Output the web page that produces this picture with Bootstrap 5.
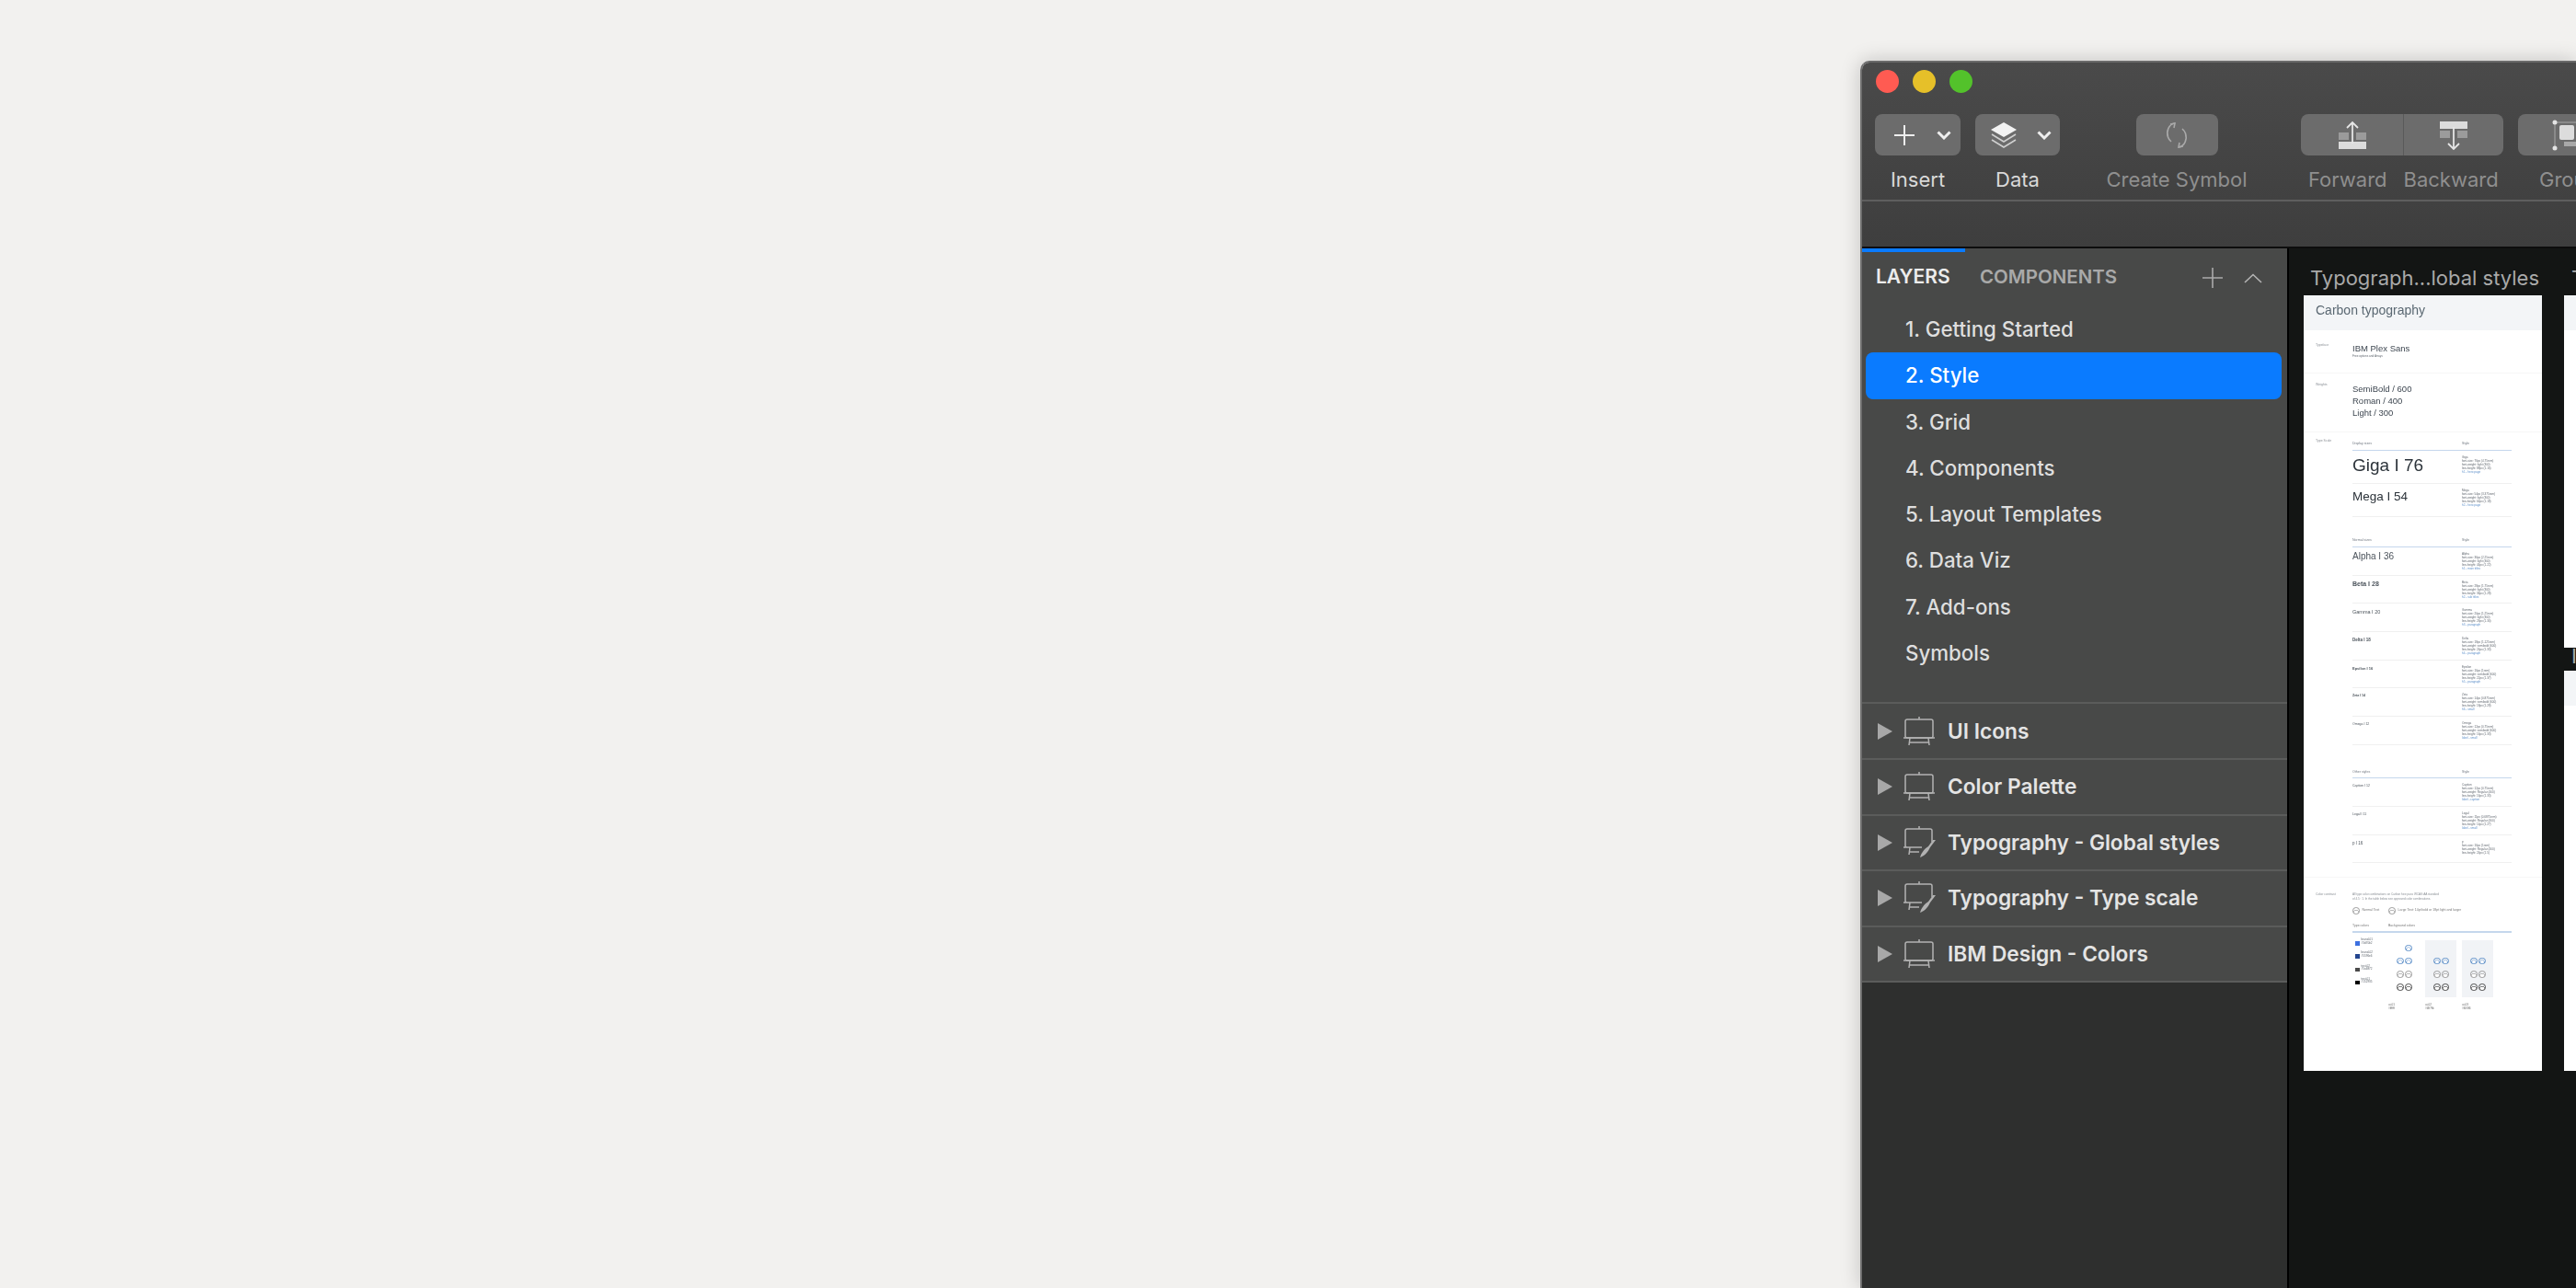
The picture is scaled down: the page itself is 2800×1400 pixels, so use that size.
<!DOCTYPE html>
<html lang="en">

<head>
  <meta charset="UTF-8" />
  <title>Sketch - Carbon Design Kit</title>
  <link href="https://cdn.jsdelivr.net/npm/bootstrap@5.3.0/dist/css/bootstrap.min.css" rel="stylesheet" />
  <style>
    html, body { height: 100%; }
    body {
      background-color: #f2f1ef;
      font-family: Inter, "Liberation Sans", sans-serif;
      overflow: hidden;
      padding: 66px 0 0 2022px;
    }

    /* App window */
    .app-window {
      height: 1334px;
      border-top: 2px solid #6a6a6a;
      border-left: 2px solid #6f6f6f;
      border-top-left-radius: 10px;
      box-shadow: 0 0 22px rgba(0, 0, 0, .2);
      overflow: hidden;
    }
    .top-part { background: linear-gradient(#4a4a4a, #414141); border-bottom: 2px solid #5e5e5e; padding: 8px 0 9px 14px; height: 151px; }
    .light { width: 25px; height: 25px; border-radius: 50%; }
    .light-red { background: #ff5b52; }
    .light-yellow { background: #e6c029; }
    .light-green { background: #53c22b; }
    .lights { gap: 15px; padding-left: 1px; margin-bottom: 23px; }
    .tool-item { flex: none; }
    .item-data { margin-left: 16px; }
    .item-symbol { margin-left: 50px; width: 154px; }
    .item-order { margin-left: 58px; width: 220px; }
    .item-group { margin-left: 16px; }
    .tool-btn {
      --bs-btn-padding-x: 0;
      --bs-btn-padding-y: 0;
      --bs-btn-border-width: 0;
      --bs-btn-border-radius: 8px;
      --bs-btn-bg: #6c6c6c;
      --bs-btn-hover-bg: #6c6c6c;
      height: 45px;
      background-color: #6c6c6c;
    }
    .btn-insert { width: 93px; }
    .btn-data { width: 92px; }
    .btn-symbol { width: 89px; }
    .btn-forward { width: 111px; }
    .btn-backward { width: 109px; border-left: 1px solid #5a5a5a; }
    .btn-group-ico { width: 116px; }
    .ico-plus { margin-left: 20px; }
    .ico-layers { margin-left: 16px; }
    .chev-insert { margin-left: 23px; }
    .chev-data { margin-left: 21px; }
    .ico-group { margin-left: 37px; }
    .tool-label { color: #d9d9d9; font-size: 22px; line-height: 28px; margin-top: 12px; white-space: nowrap; }
    .tool-label.off { color: #8f8f8f; }
    .label-forward { margin-left: 8px; }
    .label-backward { margin-left: 18px; }
    .label-group { margin-left: 23px; }
    .lower-bar { height: 49px; background: linear-gradient(#414141, #3e3e3e); border-bottom: 2px solid #0d0d0d; box-sizing: content-box; }

    /* Sidebar */
    .side-panel { width: 462px; flex: none; background: #2e2f2e; }
    .panel-top { background: #484948; }
    .tab-row { height: 63px; padding-right: 27px; }
    .side-tab { border-top: 4px solid transparent; padding-top: 15px; line-height: 24px; font-size: 20.5px; font-weight: 600; color: #a9a9a9; }
    .side-tab.on { width: 112px; padding-left: 15px; border-top-color: #0a7bff; color: #ececec; font-size: 21px; }
    .tab-plus { margin-top: 21px; }
    .tab-up { margin: 27px 0 0 23px; }
    .page-list {
      --bs-list-group-bg: transparent;
      --bs-list-group-border-width: 0;
      --bs-list-group-color: #dedede;
      --bs-list-group-active-bg: #0a7bff;
      --bs-list-group-active-color: #fff;
      padding-bottom: 28px;
    }
    .page-list .list-group-item { height: 50.3px; line-height: 50.3px; padding: 0 0 0 43px; margin: 0 6px 0 4px; font-size: 22.3px; font-weight: 500; border-radius: 8px; }
    .layer-list { --bs-list-group-bg: transparent; --bs-list-group-border-width: 0; --bs-list-group-color: #e4e4e4; border-top: 2px solid #5b5c5b; border-radius: 0; }
    .layer-list .list-group-item { height: 60.6px; padding: 0 0 0 17px; border-bottom: 2px solid #5b5c5b; border-radius: 0; font-size: 22.7px; font-weight: 600; margin-top: 0; }
    .tri { width: 0; height: 0; border-left: 16px solid #a8a8a8; border-top: 9px solid transparent; border-bottom: 9px solid transparent; margin-right: 11px; }
    .board-ico { margin-right: 13px; flex: none; }

    /* Canvas */
    .canvas-area { background: #131514; border-left: 2px solid #000; position: relative; overflow: hidden; }
    .board-title { position: absolute; color: #a9a9a9; font-size: 22px; line-height: 30px; white-space: nowrap; }
    .title-a { left: 23px; top: 17px; }
    .title-b { left: 307px; top: 17px; }
    .title-c { left: 307px; top: 428px; }
    .artboard { position: absolute; background: #fff; font-family: "Liberation Sans", Arial, sans-serif; color: #3d4650; filter: blur(.25px); }
    .board-main { left: 16px; top: 51px; width: 259px; height: 843px; }
    .board-b { left: 299px; top: 51px; width: 60px; height: 383px; }
    .board-c { left: 299px; top: 459px; width: 60px; height: 435px; }
    .ab-head { background: #f3f5f7; height: 38px; padding: 6px 0 0 13px; font-size: 14px; line-height: 20px; color: #5a6872; }
    .ab-sec { display: grid; grid-template-columns: 53px 173px; border-bottom: 1px solid #f7f7f7; }
    .sec-face { height: 47px; padding-top: 14px; }
    .sec-weight { height: 64px; padding-top: 10px; }
    .sec-scale { height: 484px; padding-top: 7px; }
    .sec-contrast { padding-top: 16px; border-bottom: 0; }
    .ab-label { font-size: 3.5px; padding-left: 13px; color: #8a8f95; }
    .face-name { font-size: 9.5px; line-height: 11px; }
    .face-note { margin-top: 1px; color: #8a8f95; }
    .weight-list { font-size: 9.5px; line-height: 13px; }
    .scale-head { display: grid; grid-template-columns: 119px 54px; font-size: 3.6px; color: #707780; height: 13px; border-bottom: 1.5px solid #c5d7ec; align-items: center; }
    .gap-head { margin-top: 20px; }
    .gap-other { margin-top: 23.5px; }
    .scale-row { display: grid; grid-template-columns: 119px 54px; height: 30.7px; border-bottom: 1px solid #f0f0f0; padding-top: 5px; }
    .scale-row.big { height: 36px; }
    .spec { font-size: 3.1px; line-height: 4px; color: #60676f; white-space: nowrap; }
    .spec i { font-style: normal; color: #5d8fc9; display: block; }
    .mini-name { color: #4b535b; white-space: nowrap; }
    .n-giga { font-size: 19px; line-height: 22px; color: #2c333a; }
    .n-mega { font-size: 13.5px; line-height: 18px; color: #2c333a; }
    .n-alpha { font-size: 10px; line-height: 9px; }
    .n-beta { font-size: 7px; line-height: 8px; font-weight: 700; }
    .n-gamma { font-size: 5.5px; line-height: 8px; }
    .n-delta { font-size: 4.5px; line-height: 7px; font-weight: 700; }
    .n-eps { font-size: 4px; line-height: 7px; font-weight: 700; }
    .n-zeta { font-size: 3.5px; line-height: 6px; font-weight: 700; }
    .n-small { font-size: 3.5px; line-height: 6px; }
    .n-p { font-size: 4.5px; line-height: 7px; }
    .contrast-note { line-height: 4.5px; color: #8a8f95; }
    .legend { margin-top: 7px; height: 8px; font-size: 3.5px; color: #777; }
    .legend-gap { margin-top: 8.5px; }
    .legend .aa { margin-right: 3px; }
    .legend .aa-second { margin-left: 10px; }
    .types-col { width: 39px; }
    .head-rule { height: 2px; background: #c5d7ec; margin: 1.5px 0 8px; }
    .tone-grid { display: grid; grid-template-columns: 33px 34px 34px 34px; gap: 0 6px; }
    .tone-body { height: 62px; }
    .swatch-col { padding-left: 3px; }
    .swatch-row { height: 14.3px; }
    .swatch-row:first-child { margin-top: -2px; }
    .swatch { width: 4.5px; height: 4.5px; margin-top: 3px; flex: none; }
    .sw-a { background: #3d70e0; }
    .sw-b { background: #24468f; }
    .sw-c { background: #4a4a4a; }
    .sw-d { background: #000; }
    .swatch-text { line-height: 3.6px; margin-left: 2px; }
    .tone-col { padding-top: 4.5px; }
    .tone-col.tint { background: #f1f3f6; }
    .tone-row { height: 14.3px; padding-left: 9px; gap: 1.5px; }
    .aa { width: 7.5px; height: 7.5px; border-radius: 50%; border: 1.2px solid currentColor; background: radial-gradient(circle at 50% 85%, #fff 42%, currentColor 46%, transparent 60%); display: block; }
    .aa-blank { visibility: hidden; }
    .tone-blue { color: #5d8fc9; }
    .tone-mid { color: #9a9a9a; }
    .tone-dark { color: #4a4a4a; }
    .foot-name { font-size: 3.1px; line-height: 3.6px; color: #666; margin-top: 7px; }
  </style>
</head>

<body>
  <div class="app-window d-flex flex-column">
    <!-- Toolbar -->
    <div class="top-part">
      <div class="lights d-flex">
        <div class="light light-red"></div>
        <div class="light light-yellow"></div>
        <div class="light light-green"></div>
      </div>
      <div class="d-flex">
        <div class="tool-item d-flex flex-column align-items-center">
          <button class="btn tool-btn btn-insert d-flex align-items-center">
            <svg class="ico-plus" width="24" height="24" viewBox="0 0 24 24"><path d="M12 1v22M1 12h22" stroke="#eee" stroke-width="2" /></svg>
            <svg class="chev-insert" width="16" height="10" viewBox="0 0 16 10"><path d="M1.500 1.500 8 8l6.500-6.500" fill="none" stroke="#eee" stroke-width="3" /></svg>
          </button>
          <div class="tool-label">Insert</div>
        </div>
        <div class="tool-item item-data d-flex flex-column align-items-center">
          <button class="btn tool-btn btn-data d-flex align-items-center">
            <svg class="ico-layers" width="30" height="30" viewBox="0 0 30 30"><path d="M15 1 29 9 15 17 1 9z" fill="#f2f2f2" /><path d="M2 14l13 8 13-8M2 20l13 8 13-8" fill="none" stroke="#cfcfcf" stroke-width="1.600" /></svg>
            <svg class="chev-data" width="16" height="10" viewBox="0 0 16 10"><path d="M1.500 1.500 8 8l6.500-6.500" fill="none" stroke="#eee" stroke-width="3" /></svg>
          </button>
          <div class="tool-label">Data</div>
        </div>
        <div class="tool-item item-symbol d-flex flex-column align-items-center">
          <button class="btn tool-btn btn-symbol d-flex align-items-center justify-content-center">
            <svg width="30" height="30" viewBox="0 0 30 30"><path d="M13 2C6 3 3.500 11 5.500 17c.8 2.300 2 3.700 3.500 5M17 28c7-1 9.500-9 7.500-15-.8-2.300-2-3.700-3.500-5" fill="none" stroke="#a9a9a9" stroke-width="1.600" /><path d="M8 3l5-1-1 5M22 27l-5 1 1-5" fill="none" stroke="#a9a9a9" stroke-width="1.600" /></svg>
          </button>
          <div class="tool-label off">Create Symbol</div>
        </div>
        <div class="tool-item item-order">
          <div class="btn-group d-flex">
            <button class="btn tool-btn btn-forward d-flex align-items-center justify-content-center">
              <svg width="32" height="32" viewBox="0 0 32 32"><path d="M1 23h30v8H1z" fill="#dcdcdc" /><path d="M1 13h11v8H1zM20 13h11v8H20z" fill="#9b9b9b" /><path d="M16 25V2M10 8l6-6 6 6" fill="none" stroke="#e6e6e6" stroke-width="1.800" /></svg>
            </button>
            <button class="btn tool-btn btn-backward d-flex align-items-center justify-content-center">
              <svg width="32" height="32" viewBox="0 0 32 32"><path d="M1 1h30v8H1z" fill="#dcdcdc" /><path d="M1 11h11v8H1zM20 11h11v8H20z" fill="#9b9b9b" /><path d="M16 7v24M10 25l6 6 6-6" fill="none" stroke="#e6e6e6" stroke-width="1.800" /></svg>
            </button>
          </div>
          <div class="d-flex">
            <div class="tool-label off label-forward">Forward</div>
            <div class="tool-label off label-backward">Backward</div>
          </div>
        </div>
        <div class="tool-item item-group d-flex flex-column">
          <button class="btn tool-btn btn-group-ico d-flex align-items-center">
            <svg class="ico-group" width="32" height="34" viewBox="0 0 32 34"><path d="M3 3v28M3 3h29" stroke="#a8a8a8" fill="none" /><circle cx="3" cy="3" r="2.500" fill="#e4e4e4" /><circle cx="3" cy="31" r="2.500" fill="#e4e4e4" /><rect x="8" y="6" width="16" height="16" rx="2" fill="#dcdcdc" /><rect x="13" y="24" width="19" height="5" fill="#a8a8a8" /></svg>
          </button>
          <div class="tool-label off label-group">Group</div>
        </div>
      </div>
    </div>
    <div class="lower-bar"></div>

    <div class="d-flex flex-grow-1">
      <!-- Layer list -->
      <div class="side-panel d-flex flex-column">
        <div class="panel-top">
          <div class="tab-row d-flex">
            <div class="side-tab on">LAYERS</div>
            <div class="side-tab ms-3">COMPONENTS</div>
            <svg class="tab-plus ms-auto" width="22" height="22" viewBox="0 0 22 22"><path d="M11 0v22M0 11h22" stroke="#ababab" stroke-width="1.600" /></svg>
            <svg class="tab-up" width="20" height="11" viewBox="0 0 20 11"><path d="M1 10l9-8.500L19 10" fill="none" stroke="#b4b4b4" stroke-width="1.600" /></svg>
          </div>
          <div class="list-group page-list">
            <div class="list-group-item">1. Getting Started</div>
            <div class="list-group-item active">2. Style</div>
            <div class="list-group-item">3. Grid</div>
            <div class="list-group-item">4. Components</div>
            <div class="list-group-item">5. Layout Templates</div>
            <div class="list-group-item">6. Data Viz</div>
            <div class="list-group-item">7. Add-ons</div>
            <div class="list-group-item">Symbols</div>
          </div>
          <div class="list-group layer-list">
            <div class="list-group-item d-flex align-items-center">
              <span class="tri"></span>
              <svg class="board-ico" width="36" height="32" viewBox="0 0 36 32"><g fill="none" stroke="#b2b2b2" stroke-width="1.500"><rect x="3" y="3" width="30" height="20" rx="2" /><path d="M18 0v3M1 23h34M8 23l-1 8M28 23l1 8M7 28h22" /></g></svg>
              <span>UI Icons</span>
            </div>
            <div class="list-group-item d-flex align-items-center">
              <span class="tri"></span>
              <svg class="board-ico" width="36" height="32" viewBox="0 0 36 32"><g fill="none" stroke="#b2b2b2" stroke-width="1.500"><rect x="3" y="3" width="30" height="20" rx="2" /><path d="M18 0v3M1 23h34M8 23l-1 8M28 23l1 8M7 28h22" /></g></svg>
              <span>Color Palette</span>
            </div>
            <div class="list-group-item d-flex align-items-center">
              <span class="tri"></span>
              <svg class="board-ico" width="36" height="36" viewBox="0 0 36 36"><g fill="none" stroke="#b2b2b2" stroke-width="1.500"><path d="M32 17V5a2 2 0 0 0-2-2H5a2 2 0 0 0-2 2v16a2 2 0 0 0 2 2h16M18 0v3M1 23h20M8 23l-1 8M7 28h11" /></g><path d="M36 15 30 23c-2 4-5 9-11 11 1-4 4-9 9-12l5-7z" fill="#b2b2b2" /></svg>
              <span>Typography - Global styles</span>
            </div>
            <div class="list-group-item d-flex align-items-center">
              <span class="tri"></span>
              <svg class="board-ico" width="36" height="36" viewBox="0 0 36 36"><g fill="none" stroke="#b2b2b2" stroke-width="1.500"><path d="M32 17V5a2 2 0 0 0-2-2H5a2 2 0 0 0-2 2v16a2 2 0 0 0 2 2h16M18 0v3M1 23h20M8 23l-1 8M7 28h11" /></g><path d="M36 15 30 23c-2 4-5 9-11 11 1-4 4-9 9-12l5-7z" fill="#b2b2b2" /></svg>
              <span>Typography - Type scale</span>
            </div>
            <div class="list-group-item d-flex align-items-center">
              <span class="tri"></span>
              <svg class="board-ico" width="36" height="32" viewBox="0 0 36 32"><g fill="none" stroke="#b2b2b2" stroke-width="1.500"><rect x="3" y="3" width="30" height="20" rx="2" /><path d="M18 0v3M1 23h34M8 23l-1 8M28 23l1 8M7 28h22" /></g></svg>
              <span>IBM Design - Colors</span>
            </div>
          </div>
        </div>
      </div>

      <!-- Canvas with artboards -->
      <div class="canvas-area flex-grow-1">
        <div class="board-title title-a">Typograph...lobal styles</div>
        <div class="board-title title-b">Typography</div>
        <div class="board-title title-c">IBM</div>

        <div class="artboard board-main">
          <div class="ab-head">Carbon typography</div>
          <div class="ab-sec sec-face">
            <div class="ab-label">Typeface</div>
            <div>
              <div class="face-name">IBM Plex Sans</div>
              <div class="spec face-note">Free options and Arrays</div>
            </div>
          </div>
          <div class="ab-sec sec-weight">
            <div class="ab-label">Weights</div>
            <div class="weight-list">SemiBold / 600<br />Roman / 400<br />Light / 300</div>
          </div>
          <div class="ab-sec sec-scale">
            <div class="ab-label">Type Scale</div>
            <div>
              <div class="scale-head"><span>Display sizes</span><span>Style</span></div>
              <div class="scale-row big">
                <div class="mini-name n-giga">Giga I 76</div>
                <div class="spec">Giga<br />font-size: 76px (4.75rem)<br />font-weight: light (300)<br />line-height: 88px (1.16)<i>h1 - hero page</i></div>
              </div>
              <div class="scale-row big">
                <div class="mini-name n-mega">Mega I 54</div>
                <div class="spec">Mega<br />font-size: 54px (3.375rem)<br />font-weight: light (300)<br />line-height: 64px (1.18)<i>h2 - hero page</i></div>
              </div>
              <div class="scale-head gap-head"><span>Normal sizes</span><span>Style</span></div>
              <div class="scale-row">
                <div class="mini-name n-alpha">Alpha I 36</div>
                <div class="spec">Alpha<br />font-size: 36px (2.25rem)<br />font-weight: light (300)<br />line-height: 44px (1.22)<i>h1 - main titles</i></div>
              </div>
              <div class="scale-row">
                <div class="mini-name n-beta">Beta I 28</div>
                <div class="spec">Beta<br />font-size: 28px (1.75rem)<br />font-weight: light (300)<br />line-height: 36px (1.28)<i>h2 - sub titles</i></div>
              </div>
              <div class="scale-row">
                <div class="mini-name n-gamma">Gamma I 20</div>
                <div class="spec">Gamma<br />font-size: 20px (1.25rem)<br />font-weight: light (300)<br />line-height: 26px (1.30)<i>h3 - paragraph</i></div>
              </div>
              <div class="scale-row">
                <div class="mini-name n-delta">Delta I 18</div>
                <div class="spec">Delta<br />font-size: 18px (1.125rem)<br />font-weight: semibold (600)<br />line-height: 24px (1.33)<i>h4 - paragraph</i></div>
              </div>
              <div class="scale-row">
                <div class="mini-name n-eps">Epsilon I 16</div>
                <div class="spec">Epsilon<br />font-size: 16px (1rem)<br />font-weight: semibold (600)<br />line-height: 22px (1.37)<i>h5 - paragraph</i></div>
              </div>
              <div class="scale-row">
                <div class="mini-name n-zeta">Zeta I 14</div>
                <div class="spec">Zeta<br />font-size: 14px (0.875rem)<br />font-weight: semibold (600)<br />line-height: 18px (1.28)<i>h6 - small</i></div>
              </div>
              <div class="scale-row">
                <div class="mini-name n-small">Omega I 12</div>
                <div class="spec">Omega<br />font-size: 12px (0.75rem)<br />font-weight: semibold (600)<br />line-height: 16px (1.33)<i>label - small</i></div>
              </div>
              <div class="scale-head gap-other"><span>Other styles</span><span>Style</span></div>
              <div class="scale-row">
                <div class="mini-name n-small">Caption I 12</div>
                <div class="spec">Caption<br />font-size: 12px (0.75rem)<br />font-weight: Regular (400)<br />line-height: 16px (1.33)<i>label - caption</i></div>
              </div>
              <div class="scale-row">
                <div class="mini-name n-small">Legal I 11</div>
                <div class="spec">Legal<br />font-size: 11px (0.6875rem)<br />font-weight: Regular (400)<br />line-height: 14px (1.27)<i>label - small</i></div>
              </div>
              <div class="scale-row">
                <div class="mini-name n-p">p I 16</div>
                <div class="spec">p<br />font-size: 16px (1rem)<br />font-weight: Regular (400)<br />line-height: 24px (1.5)</div>
              </div>
            </div>
          </div>
          <div class="ab-sec sec-contrast">
            <div class="ab-label">Color contrast</div>
            <div>
              <div class="spec contrast-note">All type color combinations on Carbon hive pass WCAG AA standard<br />of 4.5 : 1. In the table below see approved color combinations.</div>
              <div class="legend d-flex align-items-center">
                <span class="aa tone-mid"></span><span>Normal Text</span>
                <span class="aa aa-second tone-mid"></span><span>Large Text: 14pt bold or 18pt light and larger</span>
              </div>
              <div class="legend legend-gap d-flex align-items-center">
                <span class="types-col">Type colors</span><span>Background colors</span>
              </div>
              <div class="head-rule"></div>
              <div class="tone-grid tone-body">
                <div class="swatch-col">
                  <div class="swatch-row d-flex"><span class="swatch sw-a"></span><span class="spec swatch-text">brand-01<br />#3d70b2</span></div>
                  <div class="swatch-row d-flex"><span class="swatch sw-b"></span><span class="spec swatch-text">brand-02<br />#5596e6</span></div>
                  <div class="swatch-row d-flex"><span class="swatch sw-c"></span><span class="spec swatch-text">text-02<br />#5a6872</span></div>
                  <div class="swatch-row d-flex"><span class="swatch sw-d"></span><span class="spec swatch-text">text-01<br />#152935</span></div>
                </div>
                <div class="tone-col">
                  <div class="tone-row d-flex"><span class="aa aa-blank"></span><span class="aa tone-blue"></span></div>
                  <div class="tone-row d-flex"><span class="aa tone-blue"></span><span class="aa tone-blue"></span></div>
                  <div class="tone-row d-flex"><span class="aa tone-mid"></span><span class="aa tone-mid"></span></div>
                  <div class="tone-row d-flex"><span class="aa tone-dark"></span><span class="aa tone-dark"></span></div>
                </div>
                <div class="tone-col tint">
                  <div class="tone-row d-flex"></div>
                  <div class="tone-row d-flex"><span class="aa tone-blue"></span><span class="aa tone-blue"></span></div>
                  <div class="tone-row d-flex"><span class="aa tone-mid"></span><span class="aa tone-mid"></span></div>
                  <div class="tone-row d-flex"><span class="aa tone-dark"></span><span class="aa tone-dark"></span></div>
                </div>
                <div class="tone-col tint">
                  <div class="tone-row d-flex"></div>
                  <div class="tone-row d-flex"><span class="aa tone-blue"></span><span class="aa tone-blue"></span></div>
                  <div class="tone-row d-flex"><span class="aa tone-mid"></span><span class="aa tone-mid"></span></div>
                  <div class="tone-row d-flex"><span class="aa tone-dark"></span><span class="aa tone-dark"></span></div>
                </div>
              </div>
              <div class="tone-grid">
                <div></div>
                <div class="foot-name">ui-01<br />#ffffff</div>
                <div class="foot-name">ui-02<br />#f4f7fb</div>
                <div class="foot-name">ui-03<br />#f0f3f6</div>
              </div>
            </div>
          </div>
        </div>

        <div class="artboard board-b"><div class="ab-head"></div></div>
        <div class="artboard board-c"><div class="ab-head"></div></div>
      </div>
    </div>
  </div>

  <script src="https://cdn.jsdelivr.net/npm/bootstrap@5.3.0/dist/js/bootstrap.bundle.min.js"></script>
</body>

</html>
